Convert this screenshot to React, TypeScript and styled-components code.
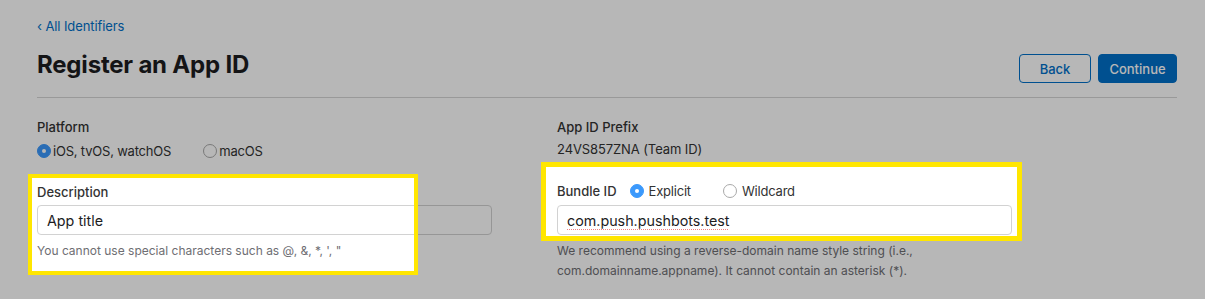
import React from "react";
import styled, { createGlobalStyle } from "styled-components";

const GlobalStyle = createGlobalStyle`
  html, body { margin: 0; padding: 0; background: #ffffff; }
  body { font-family: Inter, "Noto Sans", "Liberation Sans", sans-serif; color: #1d1d1f; }
  * { box-sizing: border-box; }
`;

const Page = styled.div`
  position: relative;
  width: 1205px;
  height: 299px;
  overflow: hidden;
  background: #ffffff;
  padding: 16px 28px 0 37px;
`;

const BackLink = styled.a`
  display: block;
  font-size: 13px;
  line-height: 20px;
  color: #0070c9;
  text-decoration: none;
  letter-spacing: -0.1px;
`;

const Header = styled.header`
  display: flex;
  justify-content: space-between;
  align-items: flex-start;
  margin-top: 12px;
  padding-bottom: 14px;
  border-bottom: 1px solid #d6d6d6;
`;

const Title = styled.h1`
  margin: 1px 0 0;
  font-size: 24px;
  line-height: 32px;
  font-weight: 700;
  letter-spacing: -0.2px;
  color: #1d1d1f;
`;

const ButtonGroup = styled.div`
  display: flex;
  gap: 7px;
  margin-top: 6px;
`;

const Button = styled.button<{ $primary?: boolean; $w: number }>`
  width: ${(p) => p.$w}px;
  height: 29px;
  border-radius: 4px;
  border: 1px solid #0070c9;
  background: ${(p) => (p.$primary ? "#0070c9" : "#ffffff")};
  color: ${(p) => (p.$primary ? "#ffffff" : "#0070c9")};
  font-family: inherit;
  font-size: 13px;
  font-weight: 500;
  padding: 0;
`;

const Columns = styled.div`
  display: grid;
  grid-template-columns: 455px 455px;
  column-gap: 65px;
  margin-top: 20px;
`;

const Column = styled.div`
  display: flex;
  flex-direction: column;
`;

const Label = styled.div<{ $mt?: number }>`
  font-size: 13px;
  line-height: 18px;
  font-weight: 500;
  color: #333333;
  margin-top: ${(p) => p.$mt ?? 0}px;
`;

const Value = styled.div<{ $mt?: number }>`
  font-size: 13px;
  line-height: 18px;
  letter-spacing: -0.1px;
  color: #333333;
  margin-top: ${(p) => p.$mt ?? 0}px;
`;

const RadioRow = styled.div<{ $mt?: number }>`
  display: flex;
  align-items: center;
  height: 18px;
  margin-top: ${(p) => p.$mt ?? 0}px;
`;

const RadioOption = styled.label<{ $gap: number; $after: number }>`
  display: flex;
  align-items: center;
  gap: ${(p) => p.$gap}px;
  margin-right: ${(p) => p.$after}px;
  font-size: 13px;
  letter-spacing: -0.2px;
  color: #333333;
`;

const RadioDot = styled.span<{ $on?: boolean }>`
  width: 14px;
  height: 14px;
  border-radius: 50%;
  flex: none;
  display: inline-flex;
  align-items: center;
  justify-content: center;
  background: ${(p) => (p.$on ? "#3b99fc" : "#ffffff")};
  border: 1px solid ${(p) => (p.$on ? "#3b99fc" : "#a9a9a9")};
  &::after {
    content: "";
    width: 4px;
    height: 4px;
    border-radius: 50%;
    background: #ffffff;
    display: ${(p) => (p.$on ? "block" : "none")};
  }
`;

const Input = styled.div<{ $mt?: number }>`
  height: 30px;
  margin-top: ${(p) => p.$mt ?? 0}px;
  border: 1px solid #d2d2d2;
  border-radius: 4px;
  background: #ffffff;
  padding: 0 9px;
  display: flex;
  align-items: center;
  font-size: 14.3px;
  color: #1d1d1f;
`;

const Misspelled = styled.span`
  text-decoration-line: underline;
  text-decoration-style: dotted;
  text-decoration-color: #f08080;
  text-decoration-thickness: 1px;
  text-underline-offset: 3px;
`;

const Help = styled.p<{ $mt?: number }>`
  margin: ${(p) => p.$mt ?? 0}px 0 0;
  font-size: 12px;
  line-height: 20px;
  color: #6e6e73;
`;

const BundleLabel = styled(Label)`
  margin-right: 13px;
`;

const Dim = styled.div`
  position: absolute;
  inset: 0;
  background: rgba(0, 0, 0, 0.282);
  clip-path: polygon(
    evenodd,
    0 0, 1205px 0, 1205px 299px, 0 299px, 0 0,
    32px 178px, 414px 178px, 414px 271px, 32px 271px, 32px 178px,
    0 0,
    546px 167px, 1017px 167px, 1017px 236px, 546px 236px, 546px 167px,
    0 0
  );
  pointer-events: none;
`;

const Highlight = styled.div<{ $x: number; $y: number; $w: number; $h: number; $b: number }>`
  position: absolute;
  left: ${(p) => p.$x}px;
  top: ${(p) => p.$y}px;
  width: ${(p) => p.$w}px;
  height: ${(p) => p.$h}px;
  border: ${(p) => p.$b}px solid #ffe600;
  pointer-events: none;
`;

export default function App() {
  return (
    <>
      <GlobalStyle />
      <Page>
        <BackLink href="#">‹ All Identifiers</BackLink>
        <Header>
          <Title>Register an App ID</Title>
          <ButtonGroup>
            <Button $w={72}>Back</Button>
            <Button $w={79} $primary>
              Continue
            </Button>
          </ButtonGroup>
        </Header>
        <Columns>
          <Column>
            <Label>Platform</Label>
            <RadioRow $mt={6}>
              <RadioOption $gap={2} $after={32}>
                <RadioDot $on />
                iOS, tvOS, watchOS
              </RadioOption>
              <RadioOption $gap={2} $after={0}>
                <RadioDot />
                macOS
              </RadioOption>
            </RadioRow>
            <Label $mt={23}>Description</Label>
            <Input $mt={4}>App title</Input>
            <Help $mt={6}>You cannot use special characters such as @, &amp;, *, ', "</Help>
          </Column>
          <Column>
            <Label>App ID Prefix</Label>
            <Value $mt={4}>24VS857ZNA (Team ID)</Value>
            <RadioRow $mt={24}>
              <BundleLabel>Bundle ID</BundleLabel>
              <RadioOption $gap={5} $after={32}>
                <RadioDot $on />
                Explicit
              </RadioOption>
              <RadioOption $gap={5} $after={0}>
                <RadioDot />
                Wildcard
              </RadioOption>
            </RadioRow>
            <Input $mt={5}>
              <Misspelled>com.push.pushbots.test</Misspelled>
            </Input>
            <Help $mt={6}>
              We recommend using a reverse-domain name style string (i.e.,
              <br />
              com.domainname.appname). It cannot contain an asterisk (*).
            </Help>
          </Column>
        </Columns>
        <Dim />
        <Highlight $x={28} $y={174} $w={390} $h={101} $b={4} />
        <Highlight $x={541} $y={162} $w={481} $h={79} $b={5} />
      </Page>
    </>
  );
}
